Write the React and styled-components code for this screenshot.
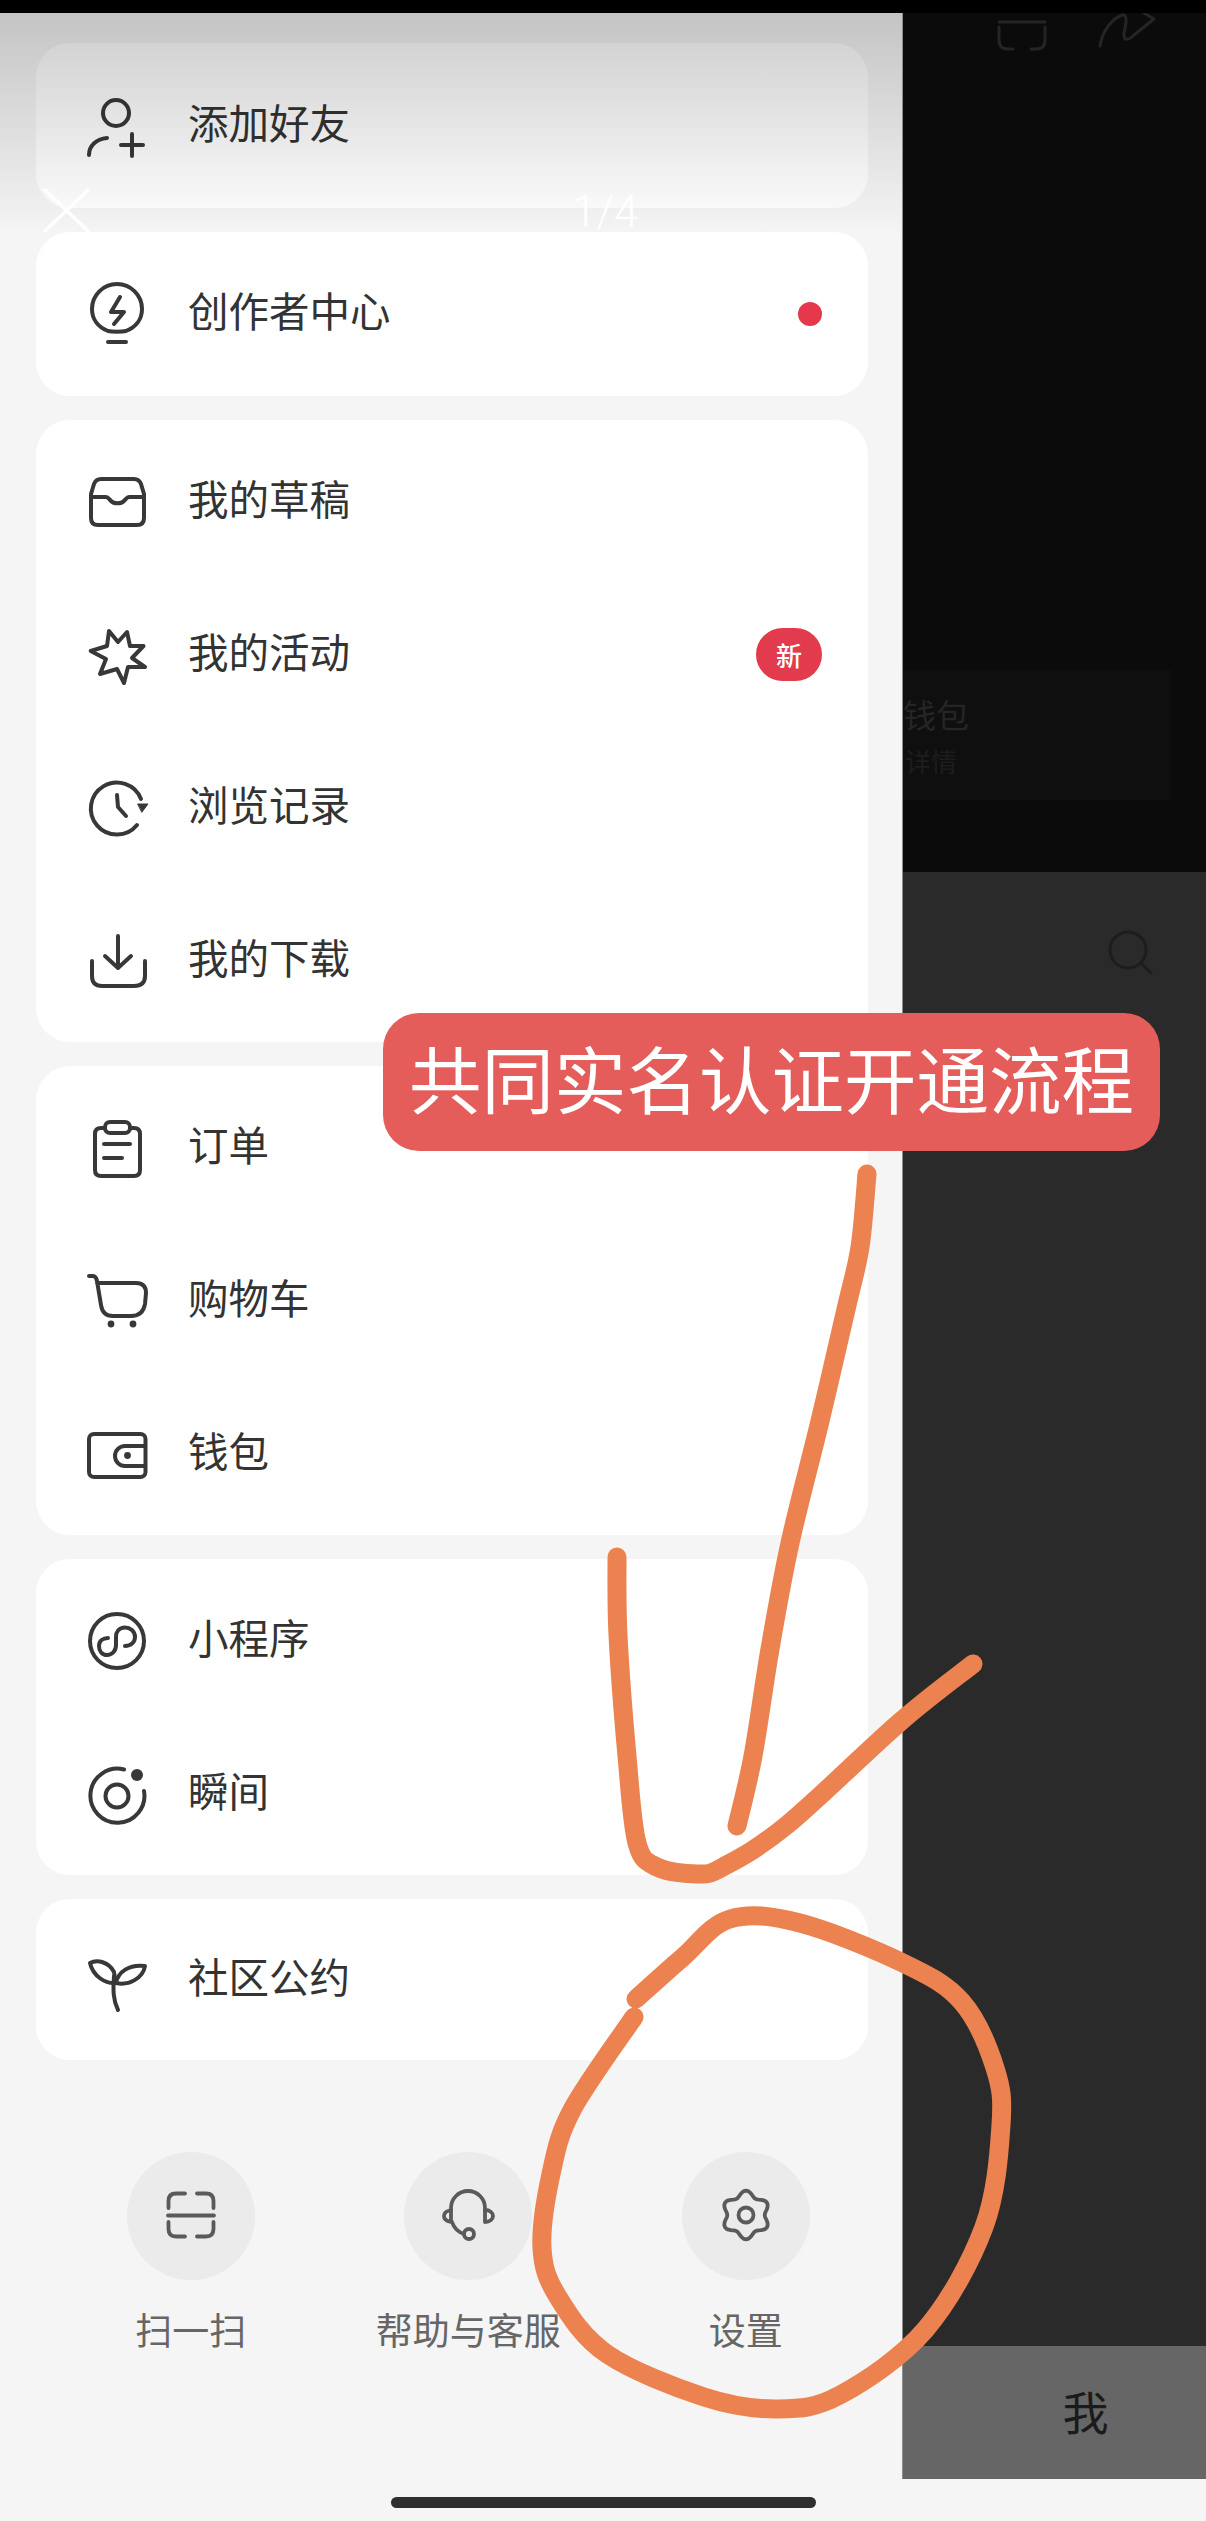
import React from "react";
import styled, { createGlobalStyle } from "styled-components";

const Global = createGlobalStyle`
  html, body { margin: 0; padding: 0; background: #f5f5f5; }
  * { box-sizing: border-box; }
`;

const Screen = styled.div`
  position: relative;
  width: 1206px;
  height: 2521px;
  overflow: hidden;
  background: #f5f5f5;
  font-family: "Noto Sans CJK SC", "Noto Sans", sans-serif;
`;
const StatusBar = styled.div`
  height: 13px;
  background: #000;
`;
const Body = styled.div`
  display: flex;
  height: 2466px;
`;
const Drawer = styled.aside`
  width: 902px;
  flex: none;
  display: flex;
  flex-direction: column;
  gap: 24px;
  padding: 30px 34px 0 36px;
  background: #f5f5f5;
`;
const Card = styled.section`
  padding: ${(p) => p.$pad}px 0;
  border-radius: 34px;
  background: #fff;
`;
const Row = styled.div`
  display: flex;
  align-items: center;
  gap: 41px;
  height: 153px;
  padding: 0 46px 0 51px;
`;
const RowIcon = styled.svg`
  flex: none;
  width: 60px;
  height: 60px;
  overflow: visible;
  fill: none;
  stroke: #383838;
  stroke-width: 4;
  stroke-linecap: round;
  stroke-linejoin: round;
`;
const RowLabel = styled.span`
  margin-bottom: 8px;
  font-size: 40.5px;
  line-height: 52px;
  color: #333;
`;
const Dot = styled.i`
  margin-left: auto;
  width: 24px;
  height: 24px;
  border-radius: 50%;
  background: #e5384c;
`;
const NewBadge = styled.span`
  margin-left: auto;
  width: 66px;
  height: 53px;
  border-radius: 27px;
  background: #e23b4d;
  color: #fff;
  font-size: 26px;
  font-weight: 500;
  line-height: 53px;
  text-align: center;
`;
const Actions = styled.nav`
  display: grid;
  grid-template-columns: repeat(3, 277.5px);
  margin: 68px 0 0 16px;
`;
const Action = styled.div`
  display: flex;
  flex-direction: column;
  align-items: center;
  gap: 24px;
`;
const ActionCircle = styled.div`
  display: flex;
  align-items: center;
  justify-content: center;
  width: 128px;
  height: 128px;
  border-radius: 50%;
  background: #ebebeb;
`;
const ActionIcon = styled.svg`
  width: 60px;
  height: 60px;
  overflow: visible;
  fill: none;
  stroke: #5a5a5a;
  stroke-width: 3.8;
  stroke-linecap: round;
  stroke-linejoin: round;
`;
const ActionLabel = styled.span`
  font-size: 37px;
  line-height: 50px;
  color: #666;
  white-space: nowrap;
`;

const Backdrop = styled.div`
  flex: 1;
  display: flex;
  flex-direction: column;
  min-width: 0;
  overflow: hidden;
  border-left: 1px solid #8d8d8d;
`;
const DarkPanel = styled.div`
  height: 859px;
  flex: none;
  background: #0b0b0b;
`;
const DarkHeader = styled.div`
  display: flex;
  justify-content: flex-end;
  gap: 51px;
  height: 50px;
  padding-right: 50px;
`;
const FaintIcon = styled.svg`
  overflow: visible;
  fill: none;
  stroke: #252525;
  stroke-width: 3;
  stroke-linecap: round;
  stroke-linejoin: round;
`;
const WalletCard = styled.div`
  width: 268px;
  height: 130px;
  margin-top: 607px;
  padding-top: 20px;
  background: #0f0f0f;
`;
const WalletTitle = styled.div`
  font-size: 33px;
  line-height: 48px;
  color: #252525;
`;
const WalletSub = styled.div`
  padding-left: 2px;
  font-size: 26px;
  line-height: 46px;
  color: #1d1d1d;
`;
const ListPanel = styled.div`
  flex: 1;
  display: flex;
  justify-content: flex-end;
  align-items: flex-start;
  padding: 58px 54px 0 0;
  background: #2a2a2a;
`;
const TabPanel = styled.div`
  height: 133px;
  flex: none;
  display: flex;
  align-items: center;
  justify-content: center;
  padding: 0 0 6px 62px;
  background: #666;
  color: #1b1b1b;
  font-size: 46px;
`;

const Footer = styled.div`
  display: flex;
  justify-content: center;
  height: 42px;
  padding-top: 18px;
`;
const HomeBar = styled.div`
  width: 425px;
  height: 11px;
  border-radius: 6px;
  background: #2f2f2f;
`;

const TopFade = styled.div`
  position: absolute;
  top: 13px;
  left: 0;
  width: 902px;
  height: 222px;
  background: linear-gradient(rgba(0, 0, 0, 0.2), rgba(0, 0, 0, 0));
  pointer-events: none;
`;
const CloseMark = styled.svg`
  position: absolute;
  top: 188px;
  left: 42px;
  width: 49px;
  height: 45px;
  fill: none;
  stroke: #fff;
  stroke-width: 3.5;
`;
const Pager = styled.span`
  position: absolute;
  top: 182px;
  left: 572px;
  color: #fff;
  font-family: Roboto, sans-serif;
  font-size: 44px;
  font-weight: 300;
  line-height: 60px;
`;
const Banner = styled.div`
  position: absolute;
  top: 1013px;
  left: 383px;
  display: flex;
  align-items: center;
  justify-content: center;
  width: 777px;
  height: 138px;
  border-radius: 36px;
  background: #e55d5a;
  color: #fff;
  font-size: 72.5px;
  font-weight: 400;
  line-height: 1;
  padding-bottom: 10px;
`;
const Scribble = styled.svg`
  position: absolute;
  top: 0;
  left: 0;
  width: 1206px;
  height: 2521px;
  fill: none;
  stroke: #ec8250;
  stroke-width: 19;
  stroke-linecap: round;
  stroke-linejoin: round;
  pointer-events: none;
`;

// catmull-rom through the hand drawn points
function smooth(pts) {
  let d = `M${pts[0][0]} ${pts[0][1]}`;
  for (let i = 0; i < pts.length - 1; i++) {
    const p0 = pts[i - 1] || pts[i];
    const p1 = pts[i];
    const p2 = pts[i + 1];
    const p3 = pts[i + 2] || p2;
    const c1x = p1[0] + (p2[0] - p0[0]) / 6;
    const c1y = p1[1] + (p2[1] - p0[1]) / 6;
    const c2x = p2[0] - (p3[0] - p1[0]) / 6;
    const c2y = p2[1] - (p3[1] - p1[1]) / 6;
    d += `C${c1x} ${c1y} ${c2x} ${c2y} ${p2[0]} ${p2[1]}`;
  }
  return d;
}

const strokeLong = [[867,1174],[860,1247],[847,1305],[820,1421],[790,1543],[770,1649],[753,1756],[737,1826]];
const strokeHook = [[617,1557],[618,1635],[627,1756],[637,1843],[657,1867],[697,1874],[723,1867],[787,1825],[900,1722],[973,1664]];
const strokeRing = [[636,1999],[682,1958],[730,1919],[800,1923],[905,1964],[962,2002],[995,2068],[1001,2125],[984,2227],[925,2330],[840,2395],[778,2409],[704,2397],[607,2354],[558,2297],[542,2248],[551,2174],[572,2110],[634,2017]];

function gearPath() {
  const pts = [];
  for (let a = 0; a < 360; a += 5) {
    const t = (a * Math.PI) / 180;
    const r = 21.5 + 2.8 * Math.cos(6 * (t - Math.PI / 2));
    pts.push(`${(30 + r * Math.cos(t)).toFixed(2)} ${(29 + r * Math.sin(t)).toFixed(2)}`);
  }
  return `M${pts.join("L")}Z`;
}

const rowIcons = {
  friend: (
    <>
      <circle cx="29" cy="17" r="13" />
      <path d="M2 59C2 50 9 43 20 42M34 49H56M45 38V60" />
    </>
  ),
  creator: (
    <>
      <path d="M21 47C11 43 5 35 5 25A25 25 0 0 1 55 25C55 35 49 43 39 47C35 48 25 48 21 47Z" />
      <path d="M33 13L24 28H37L27 40M21 58H39" />
    </>
  ),
  draft: (
    <>
      <path d="M14 7H47Q52 7 54 12L57 22V46Q57 53 50 53H11Q4 53 4 46V22L7 12Q9 7 14 7Z" />
      <path d="M4 25H19C21 25 22 27 24 29C27 32 34 32 37 29C39 27 40 25 42 25H57" />
    </>
  ),
  activity: <path d="M22 6L31 17L40 7L43 21H56.5L45 33L58 42H41L37 58L30 44L13 49L19 34L3.7 26L20 21Z" />,
  history: (
    <>
      <path d="M50 47A26 26 0 1 1 54 21" />
      <path d="M51 26H61L55 34Z" fill="#383838" strokeWidth="1" />
      <path d="M30 17L31 29L39 38" />
    </>
  ),
  download: <path d="M31 5V37M18 25L31 37L44 25M5 30V45Q5 55 15 55H47Q58 55 58 45V30" />,
  order: (
    <>
      <path d="M18 10H14Q8 10 8 16V52Q8 58 14 58H47Q53 58 53 52V16Q53 10 47 10H43" />
      <rect x="18" y="4" width="25" height="11" rx="5" />
      <path d="M17 26H43M17 40H35" />
    </>
  ),
  cart: (
    <>
      <path d="M2 5H6Q9 5 10 10L14 34Q15.5 45 26 45H44Q56 45 58 33L59 22Q59 12 49 12H10" />
      <circle cx="24" cy="53" r="3.4" fill="#383838" stroke="none" />
      <circle cx="46" cy="53" r="3.4" fill="#383838" stroke="none" />
    </>
  ),
  wallet: (
    <>
      <rect x="2" y="10" width="56.5" height="43" rx="5" />
      <path d="M58 22H38A10 10 0 0 0 38 42H58" />
      <circle cx="40.5" cy="31.5" r="3.4" fill="#383838" stroke="none" />
    </>
  ),
  mini: (
    <>
      <circle cx="30" cy="30" r="27" />
      <path d="M37 35C43 35 47 31 47 26C47 20 42 16.5 37 16.5C31 16.5 28 21 28 26V34C28 40 24 44 19 44C14 44 11 40 11 35C11 30 15 27 20 27" transform="translate(1 0)" />
    </>
  ),
  moment: (
    <>
      <path d="M37 5.5A27 27 0 1 0 57 27" />
      <circle cx="30" cy="32" r="11.5" />
      <circle cx="50" cy="11" r="6" fill="#383838" stroke="none" />
    </>
  ),
  sprout: (
    <>
      <path d="M3 13C10 9 22 12 27 22L29 33C18 34 6 26 3 13Z" />
      <path d="M29 33C31 22 42 14 58 16C56 28 42 36 29 33Z" />
      <path d="M27 26C26 40 26 50 31 60" />
    </>
  ),
};

const groups = [
  { pad: 6, rows: [{ icon: "friend", label: "添加好友" }] },
  { pad: 5.5, rows: [{ icon: "creator", label: "创作者中心", mark: "dot" }] },
  {
    pad: 5,
    rows: [
      { icon: "draft", label: "我的草稿" },
      { icon: "activity", label: "我的活动", mark: "new" },
      { icon: "history", label: "浏览记录" },
      { icon: "download", label: "我的下载" },
    ],
  },
  {
    pad: 5,
    rows: [
      { icon: "order", label: "订单" },
      { icon: "cart", label: "购物车" },
      { icon: "wallet", label: "钱包" },
    ],
  },
  {
    pad: 5,
    rows: [
      { icon: "mini", label: "小程序" },
      { icon: "moment", label: "瞬间" },
    ],
  },
  { pad: 4, rows: [{ icon: "sprout", label: "社区公约" }] },
];

const actions = [
  {
    label: "扫一扫",
    icon: <path d="M24 7.5H15Q7.5 7.5 7.5 15V22M36 7.5H45Q52.5 7.5 52.5 15V22M7 29.5H53M7.5 36V43Q7.5 50.5 15 50.5H24M52.5 36V43Q52.5 50.5 45 50.5H36" />,
  },
  {
    label: "帮助与客服",
    icon: (
      <>
        <path d="M13 25V22A17 17 0 0 1 47 22V25" />
        <path d="M13 24C8 25 6 27 6 30C6 33 8 35 13 36Z" />
        <path d="M47 24C52 24 55 27 55 30C55 33 52 36 47 36Z" />
        <path d="M14 36C16 42 20 46 26 48" />
        <circle cx="31" cy="48" r="5" />
      </>
    ),
  },
  {
    label: "设置",
    icon: (
      <>
        <path d={gearPath()} />
        <circle cx="30" cy="29" r="7.5" />
      </>
    ),
  },
];

export default function App() {
  return (
    <Screen>
      <Global />
      <StatusBar />
      <Body>
        <Drawer>
          {groups.map((g, i) => (
            <Card key={i} $pad={g.pad}>
              {g.rows.map((r) => (
                <Row key={r.label}>
                  <RowIcon viewBox="0 0 60 60">{rowIcons[r.icon]}</RowIcon>
                  <RowLabel>{r.label}</RowLabel>
                  {r.mark === "dot" && <Dot />}
                  {r.mark === "new" && <NewBadge>新</NewBadge>}
                </Row>
              ))}
            </Card>
          ))}
          <Actions>
            {actions.map((a) => (
              <Action key={a.label}>
                <ActionCircle>
                  <ActionIcon viewBox="0 0 60 60">{a.icon}</ActionIcon>
                </ActionCircle>
                <ActionLabel>{a.label}</ActionLabel>
              </Action>
            ))}
          </Actions>
        </Drawer>
        <Backdrop>
          <DarkPanel>
            <DarkHeader>
              <FaintIcon width="50" height="37" viewBox="0 0 50 37">
                <path d="M2 9H48M2 14V27Q2 36 11 36H16M48 14V27Q48 36 39 36H34" />
              </FaintIcon>
              <FaintIcon width="58" height="35" viewBox="0 0 58 35">
                <path d="M2 33C4 18 14 6 24 2C30 0 28 12 26 20C25 28 30 28 36 22L56 6L46 0" />
              </FaintIcon>
            </DarkHeader>
            <WalletCard>
              <WalletTitle>钱包</WalletTitle>
              <WalletSub>详情</WalletSub>
            </WalletCard>
          </DarkPanel>
          <ListPanel>
            <FaintIcon width="44" height="44" viewBox="0 0 44 44" style={{ stroke: "#1d1d1d" }}>
              <circle cx="20" cy="20" r="18" />
              <path d="M33 33L43 43" />
            </FaintIcon>
          </ListPanel>
          <TabPanel>我</TabPanel>
        </Backdrop>
      </Body>
      <Footer>
        <HomeBar />
      </Footer>

      <TopFade />
      <CloseMark viewBox="0 0 49 45">
        <path d="M2 1L47 44M47 1L2 44" />
      </CloseMark>
      <Pager>1/4</Pager>
      <Banner>共同实名认证开通流程</Banner>
      <Scribble viewBox="0 0 1206 2521">
        <path d={smooth(strokeLong)} />
        <path d={smooth(strokeHook)} />
        <path d={smooth(strokeRing)} />
      </Scribble>
    </Screen>
  );
}
